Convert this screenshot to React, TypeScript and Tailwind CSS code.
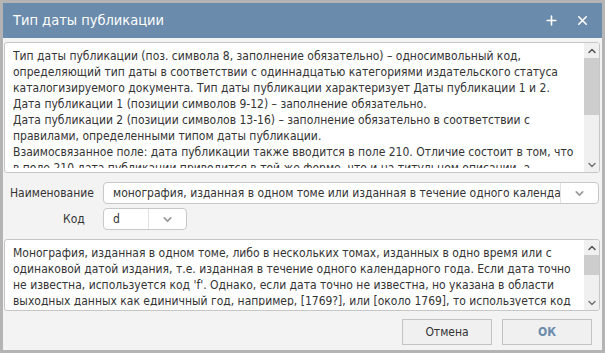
import { ChevronDown, ChevronUp, Plus, X } from "lucide-react";

const FONT = "font-['Tahoma','DejaVu_Sans_Condensed','Noto_Sans',sans-serif]";

const topLines = [
  "Тип даты публикации (поз. символа 8, заполнение обязательно) – односимвольный код,",
  "определяющий тип даты в соответствии с одиннадцатью категориями издательского статуса",
  "каталогизируемого документа. Тип даты публикации характеризует Даты публикации 1 и 2.",
  "Дата публикации 1 (позиции символов 9-12) – заполнение обязательно.",
  "Дата публикации 2 (позиции символов 13-16) – заполнение обязательно в соответствии с",
  "правилами, определенными типом даты публикации.",
  "Взаимосвязанное поле: дата публикации также вводится в поле 210. Отличие состоит в том, что",
  "в поле 210 дата публикации приводится в той же форме, что и на титульном описании, а",
];

const bottomLines = [
  "Монография, изданная в одном томе, либо в нескольких томах, изданных в одно время или с",
  "одинаковой датой издания, т.е. изданная в течение одного календарного года. Если дата точно",
  "не известна, используется код 'f'. Однако, если дата точно не известна, но указана в области",
  "выходных данных как единичный год, например, [1769?], или [около 1769], то используется код",
];

function ScrollBar({ thumbTop, thumbHeight }: { thumbTop: number; thumbHeight: number }) {
  return (
    <div className="flex w-[15px] shrink-0 flex-col bg-[#f0f0f0]">
      <div className="flex h-[15px] items-center justify-center">
        <ChevronUp className="size-3 text-[#555]" strokeWidth={3} />
      </div>
      <div className="relative flex-1">
        <div
          className="absolute left-0 right-0 bg-[#cdcdcd]"
          style={{ top: thumbTop, height: thumbHeight }}
        />
      </div>
      <div className="flex h-[15px] items-center justify-center">
        <ChevronDown className="size-3 text-[#777]" strokeWidth={3} />
      </div>
    </div>
  );
}

function TextBox({
  lines,
  height,
  clip,
  thumbTop,
  thumbHeight,
}: {
  lines: string[];
  height: number;
  clip: number;
  thumbTop: number;
  thumbHeight: number;
}) {
  return (
    <div
      className="flex overflow-hidden rounded-[3px] border border-[#c6c6c6] bg-white"
      style={{ height }}
    >
      <div className="flex-1 px-[8px] pt-[5px]">
        <div
          className="overflow-hidden text-[12px] leading-[16px] text-[#333]"
          style={{ height: clip }}
        >
          {lines.map((l) => (
            <div key={l} className="whitespace-nowrap">
              {l}
            </div>
          ))}
        </div>
      </div>
      <ScrollBar thumbTop={thumbTop} thumbHeight={thumbHeight} />
    </div>
  );
}

function Select({ value, width }: { value: string; width: number }) {
  return (
    <div
      className="flex h-[22px] items-stretch overflow-hidden rounded-[4px] border border-[#c8c8c8] bg-white"
      style={{ width }}
    >
      <div className="flex-1 overflow-hidden whitespace-nowrap pl-[9px] text-[12px] leading-[20px] text-[#333]">
        {value}
      </div>
      <div className="flex w-[38px] items-center justify-center border-l border-[#e2e2e2]">
        <ChevronDown className="size-[13px] text-[#9a9a9a]" strokeWidth={3} />
      </div>
    </div>
  );
}

export default function App() {
  return (
    <div className={`${FONT} h-[353px] w-[605px] bg-[#b4b4b4] p-[3px]`}>
      <div className="flex h-full flex-col bg-[#f3f3f3]">
        <div className="flex h-[35px] shrink-0 items-center bg-[#6a8bab] pl-[10px] pr-[12px] text-white">
          <span className="text-[14.5px]">Тип даты публикации</span>
          <div className="ml-auto flex items-center gap-[16px]">
            <Plus className="size-[15px]" strokeWidth={2.5} />
            <X className="size-[15px]" strokeWidth={2.5} />
          </div>
        </div>
        <div className="flex flex-1 flex-col pl-[1px] pr-[2px] pt-[4px]">
          <TextBox lines={topLines} height={131} clip={120} thumbTop={0} thumbHeight={57} />
          <div className="mt-[9px] flex items-center">
            <span className="w-[99px] pl-[6px] text-[12px] text-[#333]">Наименование</span>
            <Select
              value="монография, изданная в одном томе или изданная в течение одного календарного года"
              width={496}
            />
          </div>
          <div className="mt-[4px] flex items-center">
            <span className="w-[99px] pl-[59px] text-[12px] text-[#333]">Код</span>
            <Select value="d" width={84} />
          </div>
          <div className="mt-[9px]">
            <TextBox lines={bottomLines} height={72} clip={61} thumbTop={0} thumbHeight={20} />
          </div>
          <div className="mt-[8px] flex justify-end gap-[10px] pr-[8px]">
            <button className="h-[26px] w-[90px] border border-[#c3c3c3] bg-[#f0f0f0] text-[12px] text-[#333]">
              Отмена
            </button>
            <button className="h-[26px] w-[90px] border border-[#c3c3c3] bg-[#f0f0f0] text-[12px] font-bold text-[#6a8bab]">
              ОК
            </button>
          </div>
        </div>
      </div>
    </div>
  );
}
